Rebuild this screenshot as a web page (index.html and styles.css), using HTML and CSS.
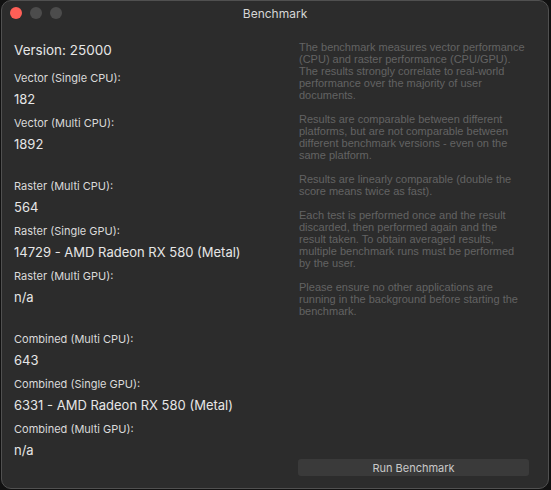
FILE: index.html
```html
<!DOCTYPE html>
<html lang="en">
<head>
    <meta charset="UTF-8">
    <title>Benchmark</title>
    <link rel="stylesheet" href="styles.css">
</head>
<body>
    <div class="window">
        <div class="titlebar">
            <div class="lights">
                <span class="light close"></span>
                <span class="light"></span>
                <span class="light"></span>
            </div>
            <div class="title">Benchmark</div>
        </div>
        <div class="content">
            <div class="results">
                <div class="version">Version: 25000</div>

                <div class="group">
                    <div class="label">Vector (Single CPU):</div>
                    <div class="value">182</div>
                    <div class="label">Vector (Multi CPU):</div>
                    <div class="value">1892</div>
                </div>

                <div class="group">
                    <div class="label">Raster (Multi CPU):</div>
                    <div class="value">564</div>
                    <div class="label">Raster (Single GPU):</div>
                    <div class="value">14729 - AMD Radeon RX 580 (Metal)</div>
                    <div class="label">Raster (Multi GPU):</div>
                    <div class="value">n/a</div>
                </div>

                <div class="group">
                    <div class="label">Combined (Multi CPU):</div>
                    <div class="value">643</div>
                    <div class="label">Combined (Single GPU):</div>
                    <div class="value">6331 - AMD Radeon RX 580 (Metal)</div>
                    <div class="label">Combined (Multi GPU):</div>
                    <div class="value">n/a</div>
                </div>
            </div>
            <div class="info">
                <p>The benchmark measures vector performance (CPU) and raster performance (CPU/GPU). The results strongly correlate to real-world performance over the majority of user documents.</p>
                <p>Results are comparable between different platforms, but are not comparable between different benchmark versions - even on the same platform.</p>
                <p>Results are linearly comparable (double the score means twice as fast).</p>
                <p>Each test is performed once and the result discarded, then performed again and the result taken. To obtain averaged results, multiple benchmark runs must be performed by the user.</p>
                <p>Please ensure no other applications are running in the background before starting the benchmark.</p>
                <button class="run">Run Benchmark</button>
            </div>
        </div>
    </div>
</body>
</html>
```

FILE: styles.css
```css
body {
    margin: 0;
    background: #111;
    font-family: 'Inter', 'Liberation Sans', sans-serif;
}
.window {
    box-sizing: border-box;
    width: 548px;
    height: 489px;
    margin-left: 1px;
    background: #2c2c2c;
    border: 1px solid #505050;
    border-radius: 10px;
    display: flex;
    flex-direction: column;
    overflow: hidden;
}
.titlebar {
    position: relative;
    flex-shrink: 0;
    height: 25px;
    display: flex;
    align-items: center;
    justify-content: center;
}
.lights {
    position: absolute;
    left: 8px;
    top: 6px;
    display: flex;
    gap: 8px;
}
.light {
    width: 12px;
    height: 12px;
    border-radius: 50%;
    background: #4c4c4c;
}
.light.close {
    background: #fe5f57;
}
.title {
    color: #d6d6d6;
    font-size: 12px;
}
.content {
    flex: 1;
    min-height: 0;
    display: grid;
    grid-template-columns: 285px 227px;
    grid-template-rows: minmax(0, 1fr);
    padding: 0 0 12px 12px;
}
.results {
    padding-top: 15px;
    color: #e6e6e6;
}
.version {
    font-size: 13.5px;
    line-height: 18px;
    margin-bottom: 11px;
}
.group {
    margin-bottom: 25px;
}
.group:last-child {
    margin-bottom: 0;
}
.label {
    font-size: 11px;
    line-height: 16px;
    color: #dadada;
    margin-top: 7px;
}
.value {
    font-size: 13px;
    line-height: 18px;
    margin-top: 4px;
}
.info {
    padding-top: 15px;
    display: flex;
    flex-direction: column;
    font-family: 'Liberation Sans', sans-serif;
    color: #636363;
    font-size: 11px;
    line-height: 12px;
}
.info p {
    margin: 0 0 12px;
}
.run {
    margin-top: auto;
    margin-left: -1px;
    width: 231px;
    height: 17px;
    padding: 0;
    border: none;
    border-radius: 3px;
    background: #3a3a3a;
    color: #c9c9c9;
    font-family: 'Inter', 'Liberation Sans', sans-serif;
    font-size: 11px;
}
```
